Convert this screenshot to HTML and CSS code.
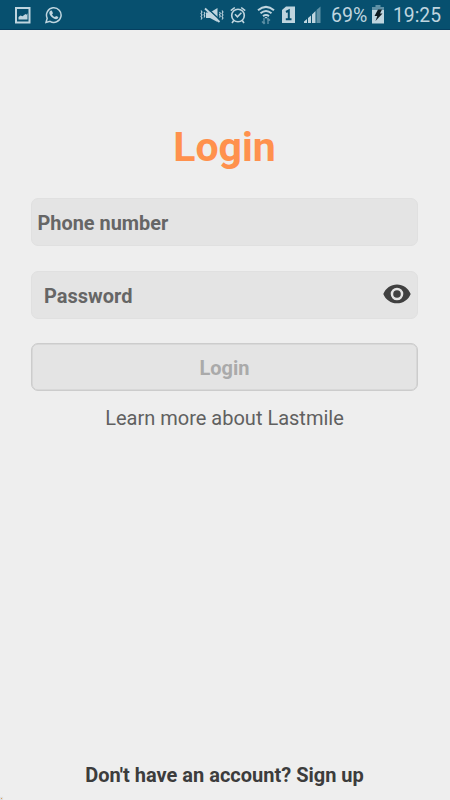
FILE: index.html
```html
<!DOCTYPE html>
<html lang="en">
<head>
<meta charset="utf-8">
<title>Login</title>
<link rel="stylesheet" href="styles.css">
</head>
<body>
<header class="status">
  <div class="status-left">
    <svg width="16" height="18" viewBox="0 0 16 18"><path fill="none" stroke="currentColor" stroke-width="2" d="M1 2h13.500v14.500H1z"/><path fill="currentColor" d="M3.500 13.500v-2.500l2-1.500 2 .8 3-2.300 1 .7 1-1.400v6.200z"/></svg>
    <svg width="17" height="18" viewBox="0 0 17 18"><path fill="none" stroke="currentColor" stroke-width="1.500" d="M1 16.500l1.200-4.300A7.300 7.300 0 1 1 5 15.300z"/><path fill="currentColor" d="M5.400 4.700l1.400-.2 1.200 2.700-1 1.200q1 2 2.900 2.700l1.200-1.200 2.300 1.200q0 2-2.200 2.100C8.100 13.100 4.500 9.800 4.300 6.800q0-1.300 1.100-2.100z"/></svg>
  </div>
  <div class="status-right">
    <svg class="mute" width="24" height="18" viewBox="0 0 24 18"><path fill="currentColor" d="M6 6.500h4l7.500-4.500v14L10 12H6z"/><path stroke="#07506f" stroke-width="1.500" d="M6.500 1.500l13.500 12.500"/><path stroke="currentColor" stroke-width="1.900" d="M5 2.500l14.500 13.500"/><path fill="none" stroke="currentColor" stroke-width="1.100" d="M1 4.500l1 1.500L1 7.500 2 9l-1 1.500L2 12l-1 1.500M4 6l.8 1.300L4 8.700l.8 1.300L4 11.500M19.500 6l.8 1.300-.8 1.400.8 1.300-.8 1.500M22 4.500l1 1.500-1 1.500L23 9l-1 1.500 1 1.500-1 1.500"/></svg>
    <svg class="alarm" width="16" height="18" viewBox="0 0 16 18"><g fill="none" stroke="currentColor" stroke-width="1.600"><circle cx="8" cy="9.500" r="6.300"/><path d="M.8 4.700L4.800 1.500M15.200 4.700l-4-3.200M3.800 14.500L2 17M12.200 14.500L14 17M5 8.300l2.400 2.500 4-4"/></g></svg>
    <svg class="wifi" width="18" height="20" viewBox="0 0 18 20"><g fill="none" stroke="currentColor" stroke-width="2"><path d="M1 5.200q8-6.700 16 0M3.500 8.300q5.500-4.500 11 0M6 11.100q3-2.200 6 0"/></g><path fill="currentColor" d="M7.500 12h3L9 13.800z"/><path fill="none" stroke="#5f91a6" stroke-width="1.400" d="M7 13v6M5 16.500l2 2 1-1M11 19v-6M10 14.500l1-1 2 2"/></svg>
    <svg class="sim" width="13" height="18" viewBox="0 0 13 18"><path fill="currentColor" d="M4 .5h9v16.500H0v-13z"/><path fill="none" stroke="#07506f" stroke-width="2" d="M4 6l2.800-1.500V13M3.800 13.200h5.700"/></svg>
    <svg class="signal" width="17" height="18" viewBox="0 0 17 18"><path fill="currentColor" d="M0 17v-1.500l3-2.500v4zM4 17v-5l3-2.500V17zM8 17V8.500L11.500 5v12z"/><path fill="#5f91a6" d="M12.500 17V4L16.500.5V17z"/></svg>
    <span class="percent">69%</span>
    <svg class="battery" width="12" height="19" viewBox="0 0 12 19"><path fill="#5f91a6" d="M3.500 0h5v2H12v3H0V2h3.500z"/><path fill="currentColor" d="M0 5h12v13.500H0z"/><path fill="#101b20" d="M6 4.500h4L8 8.500h2.500L3.500 16l1.800-5H2.500z"/></svg>
    <span class="clock">19:25</span>
  </div>
</header>
<main class="page">
  <h1 class="title">Login</h1>
  <form class="form">
    <div class="field">Phone number</div>
    <div class="field field-password"><span>Password</span>
      <svg width="28" height="20" viewBox="0 0 28 20"><path fill="#404040" fill-rule="evenodd" d="M14 .5C8 .5 2.600 4.200.3 10 2.600 15.800 8 19.300 14 19.300S25.400 15.800 27.700 10C25.400 4.200 20 .5 14 .5zm0 15.800a6.300 6.300 0 1 1 0-12.600 6.300 6.300 0 0 1 0 12.600z"/><circle cx="14" cy="10" r="3.800" fill="#404040"/></svg>
    </div>
    <button class="submit" type="button" disabled>Login</button>
  </form>
  <a class="learn">Learn more about Lastmile</a>
  <a class="signup">Don't have an account? Sign up</a>
</main>
<i class="speck"></i>
</body>
</html>
```
FILE: styles.css
```css
* { box-sizing: border-box; }

body {
  margin: 0;
  height: 800px;
  position: relative;
  display: flex;
  flex-direction: column;
  overflow: hidden;
  background: #eee;
  font-family: Roboto, sans-serif;
  font-size: 20px;
}

svg { display: block; flex: none; }

.status {
  height: 30px;
  display: flex;
  justify-content: space-between;
  padding: 0 10px 0 15px;
  background: #07506f;
  border-bottom: 1px solid #053f60;
  color: #bfd5df;
}

.status-left,
.status-right { display: flex; align-items: center; }
.status-left { gap: 14px; }
.alarm { margin-left: 6px; }
.wifi { margin-left: 11px; }
.sim { margin-left: 7px; }
.signal { margin-left: 9px; }
.percent { width: 36px; margin-left: 10px; font-size: 19.5px; line-height: 30px; padding-top: 2px; }
.battery { margin-left: 5px; }
.clock { width: 47px; margin-left: 9px; font-size: 19.3px; line-height: 30px; padding-top: 2px; }

.page {
  flex: 1;
  display: flex;
  flex-direction: column;
  align-items: center;
  padding: 93px 31px 13px 30px;
}

.title {
  margin: 0;
  font-size: 41px;
  line-height: 48px;
  color: #ff914d;
}

.form {
  width: 387px;
  margin-top: 27px;
  display: flex;
  flex-direction: column;
  gap: 25px;
}

.field {
  height: 48px;
  display: flex;
  align-items: center;
  justify-content: space-between;
  padding: 2px 6px 0 5.5px;
  background: #e4e4e4;
  border: 1px solid #e0e0e0;
  border-radius: 7px;
  font-size: 19.9px;
  font-weight: 700;
  color: #666;
}

.field-password { padding-left: 12px; font-size: 20px; }
.field-password svg { margin-top: -4px; }

.submit {
  height: 48px;
  margin-top: -1px;
  padding: 2px 0 0;
  background: #e4e4e4;
  border: 1.5px solid #ccc;
  border-radius: 7px;
  box-shadow: inset 0 0 0 .5px #ccc;
  font: 700 20px Roboto, sans-serif;
  color: #aaa;
}

.learn { margin-top: 15px; line-height: 24px; color: #606060; }
.signup { margin-top: auto; line-height: 24px; font-weight: 700; color: #3c3c3c; }

.speck {
  position: absolute;
  left: 1px;
  bottom: 1px;
  width: 1px;
  height: 1px;
  background: #dba05c;
  box-shadow: 0 0 1px 1px #ddd;
}
```
